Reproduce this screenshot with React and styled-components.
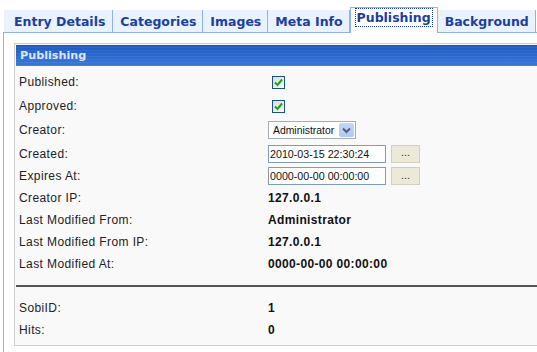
import React from "react";
import styled, { createGlobalStyle } from "styled-components";

const Global = createGlobalStyle`
  html, body { margin: 0; padding: 0; background: #fff; }
  body { font-family: "Liberation Sans", Arial, sans-serif; font-size: 12px; color: #222; }
`;

const Page = styled.div`
  padding: 9px 0 0 3px;
  width: 540px;
  overflow: hidden;
`;

const TabBar = styled.div`
  display: flex;
  align-items: flex-end;
  padding-left: 1px;
  height: 23px;
`;

const Tab = styled.div`
  font-family: "DejaVu Sans", Verdana, sans-serif;
  font-weight: bold;
  font-size: 12.5px;
  color: #1b3fa0;
  background: ${(p) => (p.$active ? "#fff" : "#eaf2fd")};
  border-right: 1px solid #8fb3ee;
  border-top: ${(p) => (p.$active ? "1px solid #8fb3ee" : "none")};
  border-left: ${(p) => (p.$active ? "1px solid #8fb3ee" : "none")};
  height: ${(p) => (p.$active ? "24px" : "22px")};
  margin-bottom: ${(p) => (p.$active ? "-1px" : "0")};
  display: flex;
  align-items: ${(p) => (p.$active ? "flex-start" : "center")};
  padding: ${(p) => (p.$active ? "1px 5px 0 5px" : p.$first ? "0 7px 0 10px" : "0 6px 0 7px")};
  position: relative;
  z-index: 1;
  white-space: nowrap;
`;

const Focus = styled.span`
  outline: 1px dotted #1b3fa0;
  padding: 0 1px;
  line-height: 17px;
`;

const Panel = styled.div`
  border-left: 1px solid #8fb3ee;
  border-top: 1px solid #8fb3ee;
  padding: 10px 0 0 10px;
  height: 320px;
`;

const Box = styled.div`
  border: 1px solid #cfcfcf;
  border-right: none;
  background: #f9f9f9;
  padding: 1px 0 0 1px;
  height: 300px;
`;

const Header = styled.div`
  height: 21px;
  background: repeating-linear-gradient(
      to bottom,
      rgba(255, 255, 255, 0) 0px,
      rgba(255, 255, 255, 0) 2px,
      rgba(255, 255, 255, 0.06) 2px,
      rgba(255, 255, 255, 0.06) 3px
    ),
    linear-gradient(to bottom, #1d5ac4, #3a78d6);
  color: #dde6f8;
  font-family: "DejaVu Sans", Verdana, sans-serif;
  font-weight: bold;
  font-size: 11.2px;
  display: flex;
  align-items: center;
  padding-left: 4px;
`;

const Rows = styled.div`
  padding: 4px 0 0 3px;
`;

const Row = styled.div`
  display: grid;
  grid-template-columns: 249px 1fr;
  align-items: center;
  height: ${(p) => p.$h || 22}px;
`;

const Label = styled.div`
  font-size: 12px;
  letter-spacing: 0.4px;
  color: #222;
`;

const Value = styled.div`
  display: flex;
  align-items: center;
  gap: 5px;
  font-weight: ${(p) => (p.$bold ? "bold" : "normal")};
  letter-spacing: ${(p) => (p.$bold ? "0.35px" : "0")};
  color: #111;
`;

const Check = styled.span`
  width: 11px;
  height: 11px;
  border: 1px solid #1c5180;
  background: linear-gradient(135deg, #dcdcd6, #fbfbf9);
  margin-left: 4px;
  display: inline-flex;
  align-items: center;
  justify-content: center;
`;

const Select = styled.div`
  width: 88px;
  height: 18px;
  box-sizing: border-box;
  border: 1px solid #a5acb2;
  background: #fff;
  display: flex;
  align-items: center;
  justify-content: space-between;
  font-size: 10.4px;
  padding-left: 4px;
`;

const Arrow = styled.span`
  width: 15px;
  height: 14px;
  margin-right: 1px;
  background: linear-gradient(#c6d7f6, #b0c8f4);
  border-radius: 2px;
  display: inline-flex;
  align-items: center;
  justify-content: center;
`;

const Input = styled.div`
  width: 118px;
  height: 18px;
  box-sizing: border-box;
  border: 1px solid #7f9db9;
  background: #fff;
  font-size: 10.7px;
  display: flex;
  align-items: center;
  padding-left: 1px;
`;

const Btn = styled.div`
  width: 29px;
  height: 18px;
  box-sizing: border-box;
  background: #ece9d8;
  border: 1px solid #d2cfbe;
  font-size: 11px;
  display: flex;
  align-items: center;
  justify-content: center;
  color: #333;
  padding-bottom: 3px;
`;

const Rule = styled.div`
  height: 2px;
  background: #555;
  margin: 10px 0 10px -3px;
`;

const CheckMark = () => (
  <svg width="9" height="9" viewBox="0 0 9 9">
    <path d="M1 4.5 L3.5 7 L8 1.5" stroke="#21a121" strokeWidth="2" fill="none" />
  </svg>
);

const tabs = ["Entry Details", "Categories", "Images", "Meta Info", "Publishing", "Background"];

export default function App() {
  return (
    <Page>
      <Global />
      <TabBar>
        {tabs.map((t, i) =>
          t === "Publishing" ? (
            <Tab key={t} $active>
              <Focus>{t}</Focus>
            </Tab>
          ) : (
            <Tab key={t} $first={i === 0}>{t}</Tab>
          )
        )}
      </TabBar>
      <Panel>
        <Box>
          <Header>Publishing</Header>
          <Rows>
            <Row $h={24}>
              <Label>Published:</Label>
              <Value><Check><CheckMark /></Check></Value>
            </Row>
            <Row $h={24}>
              <Label>Approved:</Label>
              <Value><Check><CheckMark /></Check></Value>
            </Row>
            <Row $h={24}>
              <Label>Creator:</Label>
              <Value>
                <Select>
                  Administrator
                  <Arrow>
                    <svg width="9" height="7" viewBox="0 0 9 7">
                      <path d="M1 1.5 L4.5 5 L8 1.5" stroke="#4d6185" strokeWidth="2" fill="none" />
                    </svg>
                  </Arrow>
                </Select>
              </Value>
            </Row>
            <Row $h={23}>
              <Label>Created:</Label>
              <Value>
                <Input>2010-03-15 22:30:24</Input>
                <Btn>...</Btn>
              </Value>
            </Row>
            <Row $h={22}>
              <Label>Expires At:</Label>
              <Value>
                <Input>0000-00-00 00:00:00</Input>
                <Btn>...</Btn>
              </Value>
            </Row>
            <Row>
              <Label>Creator IP:</Label>
              <Value $bold>127.0.0.1</Value>
            </Row>
            <Row>
              <Label>Last Modified From:</Label>
              <Value $bold>Administrator</Value>
            </Row>
            <Row>
              <Label>Last Modified From IP:</Label>
              <Value $bold>127.0.0.1</Value>
            </Row>
            <Row>
              <Label>Last Modified At:</Label>
              <Value $bold>0000-00-00 00:00:00</Value>
            </Row>
            <Rule />
            <Row>
              <Label>SobiID:</Label>
              <Value $bold>1</Value>
            </Row>
            <Row>
              <Label>Hits:</Label>
              <Value $bold>0</Value>
            </Row>
          </Rows>
        </Box>
      </Panel>
    </Page>
  );
}
